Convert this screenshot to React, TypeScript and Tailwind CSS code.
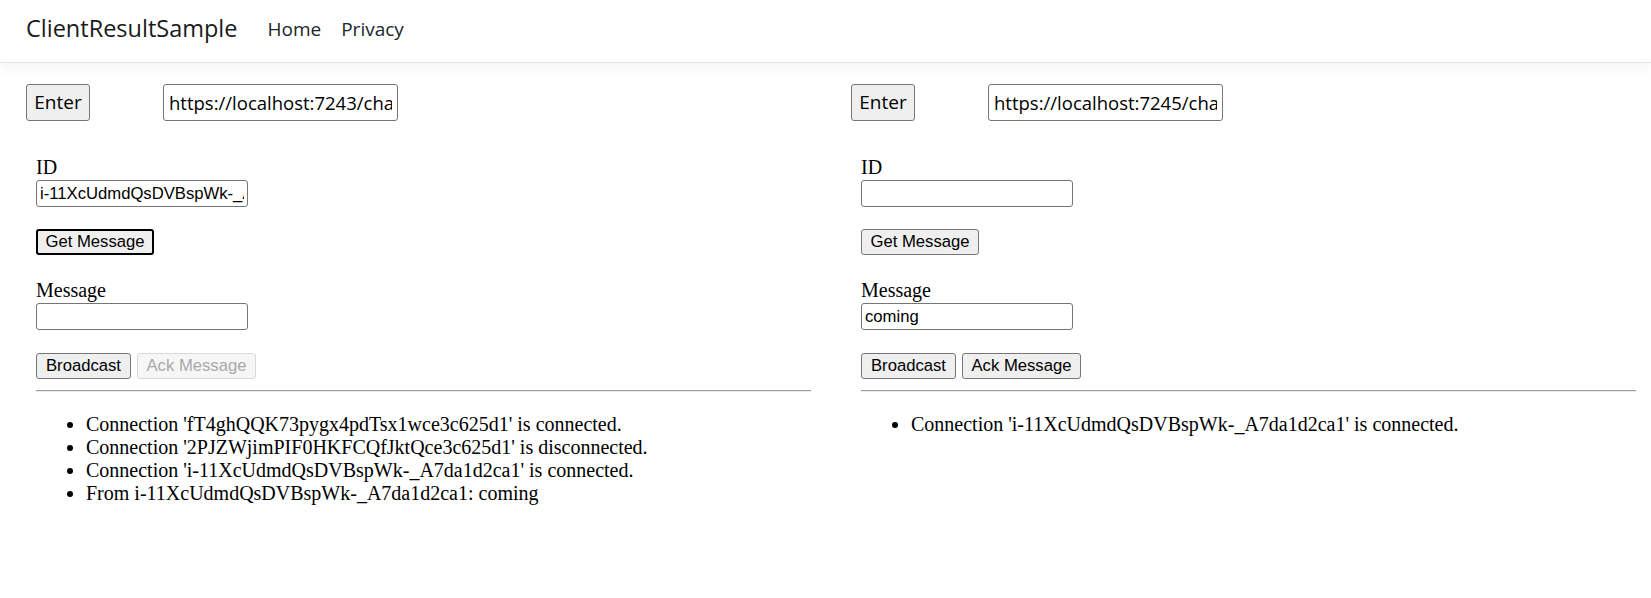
import { useState } from "react";

type PanelProps = {
    url: string;
    id: string;
    message: string;
    focused: boolean;
    ackDisabled: boolean;
    items: string[];
};

const btnBase =
    "h-[26px] rounded-[3px] border text-[16.67px] leading-none font-['Liberation_Sans',Arial,sans-serif]";
const btnNormal = "border-[#767676] bg-[#efefef] text-black";
const btnDisabled = "border-[#d9d9d9] bg-[#f6f6f6] text-[#a9a9a9]";

const field =
    "block h-[27px] w-[212px] rounded-[3px] border border-[#767676] bg-white px-[3px] text-[16.67px] text-black outline-none font-['Liberation_Sans',Arial,sans-serif]";

function ClientPanel({ url, id, message, focused, ackDisabled, items }: PanelProps) {
    const [idValue, setIdValue] = useState(id);
    const [msgValue, setMsgValue] = useState(message);

    return (
        <div className="flex flex-col">
            <div className="flex items-center">
                <button className="h-[37px] w-[64px] rounded-[3px] border border-[#767676] bg-[#efefef] text-[19px] text-black font-['Open_Sans',sans-serif]">
                    Enter
                </button>
                <input
                    className="ml-[73px] h-[37px] w-[235px] rounded-[3px] border border-[#767676] bg-white px-[5px] text-[18.5px] text-black outline-none font-['Open_Sans',sans-serif]"
                    value={url}
                    readOnly
                />
            </div>

            {/* client frame */}
            <div className="mt-[35px] px-[10px] font-['Liberation_Serif','Times_New_Roman',serif] text-[20px] leading-[23px] text-black">
                <div>ID</div>
                <input className={`mt-[1px] ${field}`} value={idValue} onChange={(e) => setIdValue(e.target.value)} />

                <button
                    className={`mt-[22px] block w-[118px] ${btnBase} ${
                        focused ? "border-2 border-black bg-[#efefef] text-black" : btnNormal
                    }`}
                >
                    Get Message
                </button>

                <div className="mt-[24px]">Message</div>
                <input className={`mt-[1px] ${field}`} value={msgValue} onChange={(e) => setMsgValue(e.target.value)} />

                <div className="mt-[23px] flex gap-[6px]">
                    <button className={`w-[95px] ${btnBase} ${btnNormal}`}>Broadcast</button>
                    <button
                        disabled={ackDisabled}
                        className={`w-[119px] ${btnBase} ${ackDisabled ? btnDisabled : btnNormal}`}
                    >
                        Ack Message
                    </button>
                </div>

                <hr className="mt-[11px] h-0 border-0 border-t border-b border-t-[#9a9a9a] border-b-[#eeeeee]" />

                <ul className="mt-[21px] list-disc pl-[50px]">
                    {items.map((item) => (
                        <li key={item}>{item}</li>
                    ))}
                </ul>
            </div>
        </div>
    );
}

export default function App() {
    return (
        <div className="min-h-[598px] bg-white">
            <header className="h-[63px] border-b border-[#e5e5e5] bg-white shadow-[0_5px_15px_rgba(0,0,0,0.05)]">
                <nav className="flex h-full items-center pb-[4px] pl-[26px] font-['Open_Sans',sans-serif]">
                    <a className="mr-[20px] text-[23.5px] text-[#1a1a1a]" href="#">
                        ClientResultSample
                    </a>
                    <a className="px-[10px] text-[19px] text-[#212529]" href="#">
                        Home
                    </a>
                    <a className="px-[10px] text-[19px] text-[#212529]" href="#">
                        Privacy
                    </a>
                </nav>
            </header>

            <main className="grid grid-cols-[795px_795px] gap-[30px] pl-[26px] pt-[21px]">
                <ClientPanel
                    url="https://localhost:7243/chat"
                    id="i-11XcUdmdQsDVBspWk-_A7da1d2ca1"
                    message=""
                    focused={true}
                    ackDisabled={true}
                    items={[
                        "Connection 'fT4ghQQK73pygx4pdTsx1wce3c625d1' is connected.",
                        "Connection '2PJZWjimPIF0HKFCQfJktQce3c625d1' is disconnected.",
                        "Connection 'i-11XcUdmdQsDVBspWk-_A7da1d2ca1' is connected.",
                        "From i-11XcUdmdQsDVBspWk-_A7da1d2ca1: coming",
                    ]}
                />
                <ClientPanel
                    url="https://localhost:7245/chat"
                    id=""
                    message="coming"
                    focused={false}
                    ackDisabled={false}
                    items={["Connection 'i-11XcUdmdQsDVBspWk-_A7da1d2ca1' is connected."]}
                />
            </main>
        </div>
    );
}
